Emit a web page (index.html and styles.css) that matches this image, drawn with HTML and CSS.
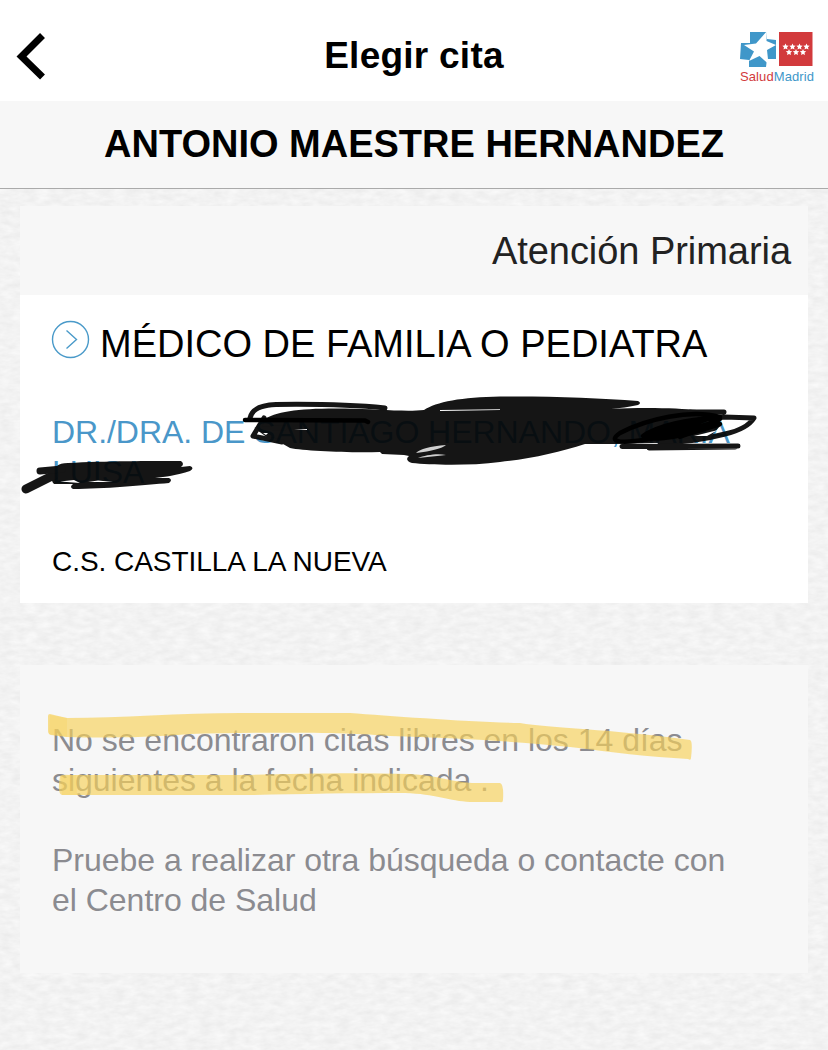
FILE: index.html
```html
<!DOCTYPE html>
<html lang="es">
<head>
    <meta charset="utf-8">
    <title>Elegir cita</title>
    <meta name="viewport" content="width=device-width, initial-scale=1.0">
    <link rel="stylesheet" href="styles.css">
</head>
<body>
    <header class="topbar">
        <svg class="back" viewBox="0 0 32 50" width="32" height="50">
            <path d="M28.500 4.500 L7.500 25.500 L28.500 46" />
        </svg>
        <h1>Elegir cita</h1>
        <div class="logo">
            <svg viewBox="0 0 74 38" width="74" height="38">
                <path fill="#4097c9" d="M10 1 L27 1 L27 8 L36 9 L36 28 L27 28 L26 36 L9 36 L9 29 L0 28 L1 12 L10 12 Z" />
                <path fill="#fff" d="M27 0 L26.500 10 L36 14 L27 19 L28.500 33 L19.500 25 L9 30 L14 20.500 L4 14 L16 12.500 Z" />
                <rect fill="#d23a3c" x="39" y="1" width="33.500" height="34" />
                <g fill="#fff">
                    <path id="star" d="M45.500 12.500l.9 2.100 2.300.2-1.700 1.500.5 2.300-2-1.200-2 1.200.5-2.300-1.700-1.500 2.300-.2z" />
                    <use href="#star" x="7" /><use href="#star" x="14" /><use href="#star" x="21" />
                    <use href="#star" x="3.500" y="5.500" /><use href="#star" x="10.500" y="5.500" /><use href="#star" x="17.500" y="5.500" />
                </g>
            </svg>
            <div class="logo-text"><span class="red">Salud</span><span class="blue">Madrid</span></div>
        </div>
    </header>

    <div class="patient">ANTONIO MAESTRE HERNANDEZ</div>

    <main>
        <svg class="paper" width="828" height="861">
            <filter id="grain" x="0" y="0" width="100%" height="100%" color-interpolation-filters="sRGB">
                <feTurbulence type="fractalNoise" baseFrequency="0.08 0.18" numOctaves="3" seed="4" />
                <feColorMatrix values="0.07 0 0 0 0.915  0.07 0 0 0 0.915  0.07 0 0 0 0.915  0 0 0 0 1" />
            </filter>
            <rect width="828" height="861" filter="url(#grain)" />
        </svg>

        <section class="card">
            <div class="card-head">Atención Primaria</div>
            <div class="card-body">
                <h2>
                    <svg class="go" viewBox="0 0 38 38" width="38" height="38">
                        <circle cx="18.500" cy="18.500" r="18" />
                        <path d="M14.500 9.500 L24.500 18.500 L14.500 27.500" />
                    </svg>
                    <span>MÉDICO DE FAMILIA O PEDIATRA</span>
                </h2>
                <p class="doctor">DR./DRA. DE SANTIAGO HERNANDO, MARIA<br>LUISA</p>
                <p class="center">C.S. CASTILLA LA NUEVA</p>
                <svg class="marker" viewBox="20 295 788 308" width="788" height="308">
                    <g class="ink">
                        <path class="fill" d="M263 420 C276 411 300 408 345 408.500 C375 409 405 412 424 410 C436 402 462 397 500 396.500 C550 396 600 398 638 401 Q642 403 638 405 C630 407 619 408 611 409 C640 407 680 408 697 410 L712 413 L722 424 L711 436 L690 442 L617 444 L585 444 C560 452 530 459 500 462 C470 466 430 465 412 463 Q404 460 409 456 L404 455 L382 454 L380 452 C350 453 305 451 290 448 L283 444 L268 438 L257 430 Z" />
                        <path class="stroke" d="M250 418 C252 408 262 405 276 404.500 C315 404 355 405 385 408" />
                        <path class="stroke" d="M264 418 L253 436 L282 442 M257 429 L285 428" />
                        <path class="stroke" d="M690 412 L724 412 M700 419 L724 417 L754 418 C749 426 738 431 725 434 C706 439 687 442 660 443" />
                        <path class="stroke" d="M622 446.500 L738 446 M649 448 L735 447" />
                        <path class="fill" d="M52 477 L57 466 Q60 463 68 463 C105 461 150 461 181 461 Q185 464 181 467 L190 466 Q195 468 190 471 C177 475 165 477 155 478 L169 478 Q173 480 169 483 C145 485 103 489 73 489 Q69 487 73 484 L54 484 Q51 481 52 477 Z" />
                        <path class="stroke wide" d="M26 489 L54 475" />
                        <path class="stroke wide thin" d="M40 471 L62 469" />
                    </g>
                    <path class="black" d="M245 420 L365 420.500 L368 422" />
                    <path class="black" d="M720 417 C690 409 647 419 620 433 C608 441 619 443 635 441 C665 438 700 429 720 419 C690 417 655 427 643 436 C656 443 690 434 720 424" />
                    <path class="black scrawl" d="M650 435 L705 419 L660 436 L714 424 L680 436" />
                    <g class="gap">
                        <path d="M416 453 Q422 447 446 445 Q440 450 416 453 Z M418 458 C425 455 438 453 446 455 C438 456 427 457 418 458 Z" class="faint" />
                        <path d="M440 410 L500 409.300 L500 410 L440 411 Z M263 433 L268 433 L266 435 Z M294 430 L307 429 L307 430 Z" />
                        <path d="M60 481.500 L74 480 L80 483 Z M88 482 L98 480.500 L113 482 Z M694 436 L718 430 L707 436 Z M728 422 L741 421 L729 426 Z" />
                    </g>
                </svg>
            </div>
        </section>

        <section class="card notice">
            <p>No se encontraron citas libres en los 14 días<br>siguientes a la fecha indicada .</p>
            <p>Pruebe a realizar otra búsqueda o contacte con<br>el Centro de Salud</p>
            <svg class="highlight" viewBox="20 665 788 308" width="788" height="308">
                <path d="M50 714 Q58 716 67 718 C120 718 180 713 240 713 L350 713 C390 716 470 722 520 723 C550 728 610 729 690 740 Q693 741 691 758 Q691 761 688 759 C650 757 610 752 570 747 C500 740 450 738 390 736 C350 732 260 732 190 734 C140 738 100 738 67 737 L51 735 Q48 734 48 731 L48 716 Q48 714 50 714 Z" />
                <path d="M60 776 Q62 774 70 775 L240 775 C290 774 350 772 410 774 C436 775 451 782 472 783 L500 783 Q504 784 503 800 Q503 803 500 802 L470 802 C450 801 435 794 405 793 C350 793 300 794 250 795 L62 795 Q57 794 60 776 Z" />
                <path class="overlap" d="M50 715 L67 718 L67 737 L49 734 Z M61 776 L76 775 L77 795 L62 795 Z" />
            </svg>
        </section>
    </main>
</body>
</html>
```
FILE: styles.css
```css
* {
    box-sizing: border-box;
}

body {
    margin: 0;
    background-color: #fff;
    font-family: "Liberation Sans", Arial, sans-serif;
    color: #000;
    height: 1050px;
    overflow: hidden;
}

h1, h2, p {
    margin: 0;
    font-weight: normal;
}

.topbar {
    display: grid;
    grid-template-columns: 90px 1fr 90px;
    align-items: center;
    height: 101px;
    padding: 11px 14px 0;
}

.back path {
    fill: none;
    stroke: #000;
    stroke-width: 7;
}

.topbar h1 {
    font-size: 37px;
    font-weight: bold;
    letter-spacing: 0.25px;
    text-align: center;
}

.logo {
    justify-self: end;
    width: 74px;
    padding-top: 3px;
}

.logo svg {
    display: block;
}

.logo-text {
    font-size: 13px;
    line-height: 15px;
    letter-spacing: 0.1px;
    white-space: nowrap;
}

.red {
    color: #d23a3c;
}

.blue {
    color: #4097c9;
}

.patient {
    height: 88px;
    line-height: 87px;
    background-color: #f7f7f7;
    border-bottom: 1px solid #aaa;
    text-align: center;
    font-size: 38px;
    font-weight: bold;
    white-space: nowrap;
}

main {
    position: relative;
    height: 861px;
    padding: 17px 20px 0;
}

/* paper grain behind the cards */
.paper {
    position: absolute;
    left: 0;
    top: 0;
}

.card {
    position: relative;
    background-color: #fff;
    white-space: nowrap;
}

.card-head {
    height: 89px;
    padding-right: 17px;
    background-color: #f7f7f7;
    color: #222;
    font-size: 38px;
    line-height: 90px;
    letter-spacing: -0.05px;
    text-align: right;
}

.card-body {
    position: relative;
    height: 308px;
    padding: 26px 32px 0;
}

.card-body h2 {
    display: flex;
    gap: 10px;
    height: 66px;
    font-size: 38px;
    line-height: 46px;
}

.go {
    fill: none;
    stroke: #4a9ac9;
    stroke-width: 1.4;
    overflow: visible;
}

.doctor {
    margin-top: 25px;
    color: #4a97c9;
    font-size: 32px;
    line-height: 40px;
    letter-spacing: -0.04px;
}

.center {
    margin-top: 50px;
    font-size: 28px;
    line-height: 40px;
    letter-spacing: -0.04px;
}

.marker, .highlight {
    position: absolute;
    left: 0;
    top: 0;
    overflow: visible;
}

.ink {
    opacity: 0.93;
}

.fill {
    fill: #040404;
}

.stroke {
    fill: none;
    stroke: #040404;
    stroke-width: 5;
    stroke-linecap: round;
    stroke-linejoin: round;
}

.wide {
    stroke-width: 9;
}

.thin {
    stroke-width: 7;
}

.black {
    fill: none;
    stroke: #000;
    stroke-width: 4.5;
    stroke-linecap: round;
    stroke-linejoin: round;
}

.scrawl {
    stroke-width: 6;
}

.gap {
    fill: #fff;
}

.faint {
    fill-opacity: 0.8;
}

.notice {
    height: 308px;
    margin-top: 62px;
    padding: 55px 32px 0;
    background-color: #f7f7f7;
    color: #8b8b90;
    font-size: 32px;
    line-height: 40px;
    letter-spacing: -0.02px;
}

.notice p {
    margin-bottom: 40px;
}

.highlight {
    fill: #f7d259;
    fill-opacity: 0.66;
}

.overlap {
    fill-opacity: 0.3;
}
```
